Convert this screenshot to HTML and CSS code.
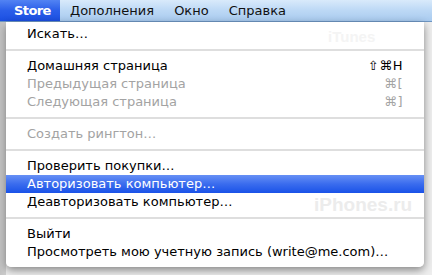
FILE: index.html
```html
<!DOCTYPE html>
<html lang="ru">
<head>
    <meta charset="UTF-8">
    <title>Store</title>
    <link rel="stylesheet" href="styles.css">
</head>
<body>
    <div class="menubar">
        <span class="top-item active">Store</span>
        <span class="top-item">Дополнения</span>
        <span class="top-item">Окно</span>
        <span class="top-item">Справка</span>
    </div>
    <div class="desk">
        <div class="menu">
            <div class="ghost ghost-title">iTunes</div>
            <div class="ghost ghost-mark">iPhones.ru</div>

            <div class="item"><span>Искать…</span></div>
            <div class="sep"></div>
            <div class="item"><span>Домашняя страница</span><span class="key">⇧⌘H</span></div>
            <div class="item off"><span>Предыдущая страница</span><span class="key">⌘[</span></div>
            <div class="item off"><span>Следующая страница</span><span class="key">⌘]</span></div>
            <div class="sep"></div>
            <div class="item off"><span>Создать рингтон…</span></div>
            <div class="sep"></div>
            <div class="item"><span>Проверить покупки…</span></div>
            <div class="item hot"><span>Авторизовать компьютер…</span></div>
            <div class="item"><span>Деавторизовать компьютер…</span></div>
            <div class="sep"></div>
            <div class="item"><span>Выйти</span></div>
            <div class="item"><span>Просмотреть мою учетную запись (write@me.com)…</span></div>
        </div>
    </div>
</body>
</html>
```

FILE: styles.css
```css
body {
    margin: 0;
    width: 432px;
    height: 275px;
    overflow: hidden;
    font-family: "DejaVu Sans", "Liberation Sans", sans-serif;
    font-size: 13px;
    background-color: #e6e6e6;
}
.menubar {
    display: flex;
    height: 21px;
    border-bottom: 1px solid #6f97c4;
    background: linear-gradient(#d9eafb, #bcd8f5 50%, #a9cbef);
}
.top-item {
    padding: 0 10px;
    line-height: 21px;
    color: #111;
}
.top-item.active {
    width: 46px;
    padding: 0 0 0 14px;
    font-weight: bold;
    letter-spacing: -0.6px;
    color: #fff;
    background: linear-gradient(#5283f3, #2a5ee9 50%, #1b4fe2);
}
.desk {
    position: relative;
    height: 253px;
    background: linear-gradient(90deg, #c4c4c4 0, #d0d0d0 6px, #eeeeee 6px);
}
.menu {
    position: absolute;
    left: 6px;
    top: 0;
    width: 418px;
    padding: 3px 0 6px;
    background-color: rgba(255, 255, 255, 0.97);
    border-radius: 0 0 5px 5px;
    box-shadow: 0 3px 9px rgba(0, 0, 0, 0.45);
}
.item {
    position: relative;
    display: flex;
    justify-content: space-between;
    height: 18px;
    line-height: 18px;
    padding: 0 21px 0 21px;
    color: #000;
}
.item.off {
    color: #a3a3a3;
}
.item.hot {
    color: #fff;
    background: linear-gradient(#6790f5, #3a6cee 50%, #1a52e8);
}
.key {
    letter-spacing: 0.5px;
}
.sep {
    height: 14px;
    background: linear-gradient(transparent 6px, #dedede 6px, #dedede 8px, transparent 8px);
}
.ghost {
    position: absolute;
    font-family: "Liberation Sans", sans-serif;
    font-weight: bold;
    color: #f4f4f4;
}
.ghost-title {
    left: 322px;
    top: 6px;
    font-size: 15px;
}
.ghost-mark {
    left: 308px;
    top: 172px;
    font-size: 19px;
    color: #ececec;
}
```
